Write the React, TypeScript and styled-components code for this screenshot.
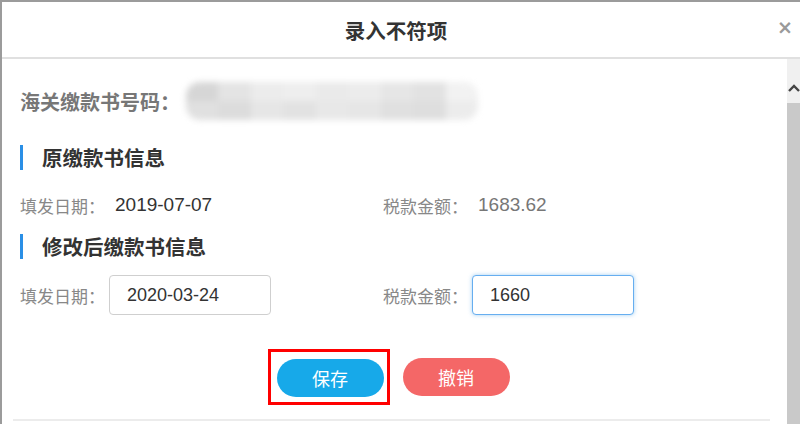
import React from "react";
import styled, { createGlobalStyle } from "styled-components";

const Global = createGlobalStyle`
  html, body { margin: 0; padding: 0; background: #fff; }
  body { font-family: "Liberation Sans", "Noto Sans CJK SC", sans-serif; }
  * { box-sizing: border-box; }
`;

const Dialog = styled.div`
  width: 800px;
  height: 424px;
  border-top: 2px solid #9b9b9b;
  border-left: 2px solid #9b9b9b;
  display: flex;
  flex-direction: column;
  overflow: hidden;
  background: #fff;
`;

const Header = styled.div`
  position: relative;
  height: 57px;
  flex: none;
  display: flex;
  align-items: center;
  justify-content: center;
  border-bottom: 2px solid #e0e0e0;
  padding-right: 10px;
`;

const Title = styled.h1`
  margin: 0;
  font-size: 20.5px;
  font-weight: bold;
  color: #333;
`;

const Close = styled.span`
  position: absolute;
  right: 7px;
  top: 14px;
  font-size: 19px;
  font-weight: bold;
  color: #9a9a9a;
  font-family: "DejaVu Sans", sans-serif;
`;

const Main = styled.div`
  flex: 1;
  display: flex;
  min-height: 0;
`;

const Content = styled.div`
  flex: 1;
  display: flex;
  flex-direction: column;
  padding: 22px 0 0 18px;
`;

const NumberRow = styled.div`
  display: flex;
  align-items: center;
  height: 40px;
`;

const NumberLabel = styled.span`
  font-size: 20px;
  font-weight: bold;
  color: #777;
`;

const Blur = styled.div`
  margin-left: 6px;
  width: 292px;
  height: 38px;
  display: grid;
  grid-template-columns: repeat(9, 1fr);
  grid-template-rows: 1fr 1fr;
  filter: blur(3px);
  border-radius: 14px;
  overflow: hidden;
`;

const Tile = styled.div<{ $c: string }>`
  background: ${(p) => p.$c};
`;

const Section = styled.div<{ $top: number }>`
  display: flex;
  align-items: center;
  margin-top: ${(p) => p.$top}px;
  height: 26px;
  font-size: 20.5px;
  font-weight: bold;
  color: #333;
  &::before {
    content: "";
    width: 3px;
    height: 25px;
    background: #2a8fe6;
    margin-right: 19px;
  }
`;

const FieldGrid = styled.div<{ $top: number; $h: number }>`
  display: grid;
  grid-template-columns: 363px 1fr;
  margin-top: ${(p) => p.$top}px;
  height: ${(p) => p.$h}px;
`;

const Field = styled.div`
  display: flex;
  align-items: center;
`;

const Label = styled.span`
  font-size: 17px;
  color: #888;
`;

const Value = styled.span<{ $muted?: boolean }>`
  margin-left: 10px;
  font-size: 19px;
  color: ${(p) => (p.$muted ? "#777" : "#333")};
`;

const Input = styled.input<{ $focus?: boolean }>`
  margin-left: 4px;
  width: 162px;
  height: 40px;
  padding: 0 0 0 17px;
  border-radius: 4px;
  border: 1px solid ${(p) => (p.$focus ? "#66aef0" : "#cfcfcf")};
  box-shadow: ${(p) => (p.$focus ? "0 0 4px rgba(102,175,233,0.6)" : "none")};
  font-family: inherit;
  font-size: 18px;
  color: #333;
  outline: none;
`;

const Actions = styled.div`
  display: flex;
  justify-content: center;
  align-items: center;
  gap: 13px;
  margin-top: 34px;
  padding-right: 30px;
`;

const Highlight = styled.div`
  border: 3px solid #f00;
  padding: 7px 3px 5px 6px;
  display: flex;
`;

const Button = styled.button<{ $bg: string }>`
  width: 107px;
  height: 38px;
  border-radius: 19px;
  border: none;
  background: ${(p) => p.$bg};
  color: #fff;
  font-family: inherit;
  font-size: 18px;
  cursor: pointer;
`;

const Footer = styled.div`
  margin: 14px 17px 0 -7px;
  border-top: 2px solid #ececec;
`;

const Scrollbar = styled.div`
  width: 13px;
  flex: none;
  display: flex;
  flex-direction: column;
  background: #c9c9c9;
`;

const ScrollUp = styled.div`
  height: 44px;
  background: #f0f0f0;
  display: flex;
  align-items: flex-end;
  justify-content: flex-start;
  padding: 0 0 10px 1px;
`;

const tiles = [
  "#d6d6d6", "#e4e4e4", "#ececec", "#eeeeee", "#eaeaea", "#ececec", "#e6e6e6", "#e2e2e2", "#f2f2f2",
  "#e0e0e0", "#dcdcdc", "#e6e6e6", "#e2e2e2", "#e8e8e8", "#e6e6e6", "#e0e0e0", "#dedede", "#ececec",
];

export default function App() {
  return (
    <>
      <Global />
      <Dialog>
        <Header>
          <Title>录入不符项</Title>
          <Close>×</Close>
        </Header>
        <Main>
          <Content>
            <NumberRow>
              <NumberLabel>海关缴款书号码：</NumberLabel>
              <Blur>
                {tiles.map((c, i) => (
                  <Tile key={i} $c={c} />
                ))}
              </Blur>
            </NumberRow>
            <Section $top={23}>原缴款书信息</Section>
            <FieldGrid $top={22} $h={26}>
              <Field>
                <Label>填发日期：</Label>
                <Value>2019-07-07</Value>
              </Field>
              <Field>
                <Label>税款金额：</Label>
                <Value $muted>1683.62</Value>
              </Field>
            </FieldGrid>
            <Section $top={15}>修改后缴款书信息</Section>
            <FieldGrid $top={16} $h={40}>
              <Field>
                <Label>填发日期：</Label>
                <Input defaultValue="2020-03-24" />
              </Field>
              <Field>
                <Label>税款金额：</Label>
                <Input $focus defaultValue="1660" />
              </Field>
            </FieldGrid>
            <Actions>
              <Highlight>
                <Button $bg="#17a9e9">保存</Button>
              </Highlight>
              <Button $bg="#f46767">撤销</Button>
            </Actions>
            <Footer />
          </Content>
          <Scrollbar>
            <ScrollUp>
              <svg width="12" height="10" viewBox="0 0 12 10">
                <path d="M1 8 L6 3 L11 8" stroke="#444" strokeWidth="2.4" fill="none" />
              </svg>
            </ScrollUp>
          </Scrollbar>
        </Main>
      </Dialog>
    </>
  );
}
